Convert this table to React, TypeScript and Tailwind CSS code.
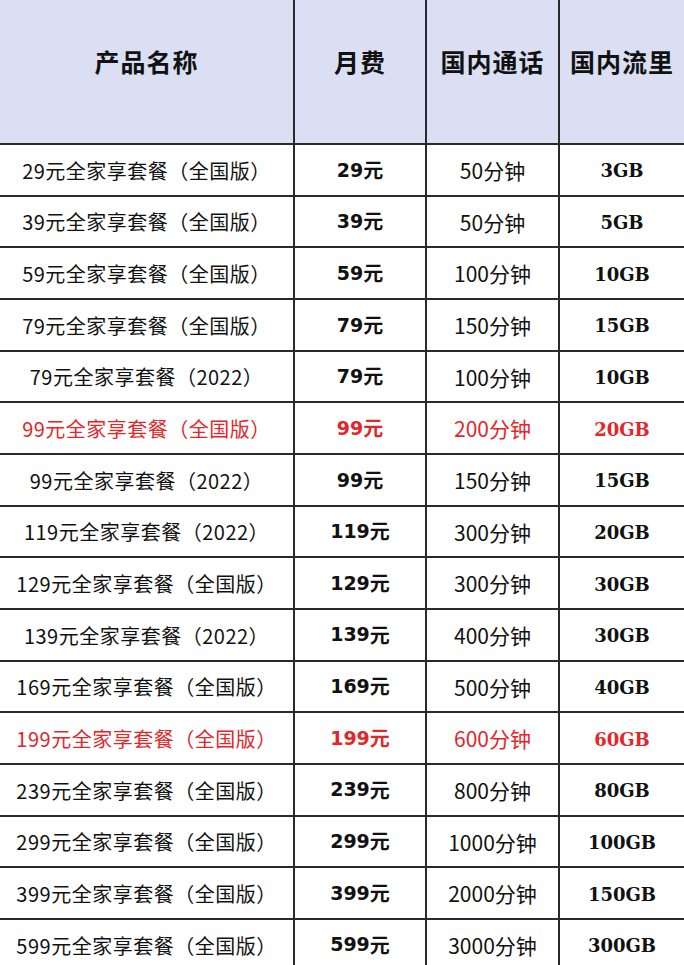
const rows = [
  { name: '29元全家享套餐（全国版）', fee: '29', call: '50分钟', data: '3GB' },
  { name: '39元全家享套餐（全国版）', fee: '39', call: '50分钟', data: '5GB' },
  { name: '59元全家享套餐（全国版）', fee: '59', call: '100分钟', data: '10GB' },
  { name: '79元全家享套餐（全国版）', fee: '79', call: '150分钟', data: '15GB' },
  { name: '79元全家享套餐（2022）', fee: '79', call: '100分钟', data: '10GB' },
  { name: '99元全家享套餐（全国版）', fee: '99', call: '200分钟', data: '20GB', red: true },
  { name: '99元全家享套餐（2022）', fee: '99', call: '150分钟', data: '15GB' },
  { name: '119元全家享套餐（2022）', fee: '119', call: '300分钟', data: '20GB' },
  { name: '129元全家享套餐（全国版）', fee: '129', call: '300分钟', data: '30GB' },
  { name: '139元全家享套餐（2022）', fee: '139', call: '400分钟', data: '30GB' },
  { name: '169元全家享套餐（全国版）', fee: '169', call: '500分钟', data: '40GB' },
  { name: '199元全家享套餐（全国版）', fee: '199', call: '600分钟', data: '60GB', red: true },
  { name: '239元全家享套餐（全国版）', fee: '239', call: '800分钟', data: '80GB' },
  { name: '299元全家享套餐（全国版）', fee: '299', call: '1000分钟', data: '100GB' },
  { name: '399元全家享套餐（全国版）', fee: '399', call: '2000分钟', data: '150GB' },
  { name: '599元全家享套餐（全国版）', fee: '599', call: '3000分钟', data: '300GB' },
];

const cjk = "font-['Noto_Sans_CJK_SC',sans-serif]";
const cell = 'flex items-center justify-center border-b-2 border-[#2a2a2a]';
const head = `${cell} bg-[#dadff3] pb-5 text-[25px] font-bold text-[#111]`;

export default function App() {
  return (
    <div className={`h-[965px] w-[684px] overflow-hidden bg-white ${cjk}`}>
      <div className="grid grid-cols-[295px_132px_133px_1fr] grid-rows-[145px_repeat(16,51.67px)]">
        <div className={`${head} border-r-2 tracking-[1px]`}>产品名称</div>
        <div className={`${head} border-r-2 tracking-[1px]`}>月费</div>
        <div className={`${head} border-r-2 tracking-[1px]`}>国内通话</div>
        <div className={`${head} tracking-[1px]`}>国内流里</div>
        {rows.map((r) => {
          const color = r.red ? 'text-[#e3262a]' : 'text-[#111]';
          return (
            <div key={r.name} className="contents">
              <div className={`${cell} border-r-2 pt-0.5 text-[20px] tracking-[0.5px] ${color}`}>{r.name}</div>
              <div className={`${cell} border-r-2 font-bold ${color}`}>
                <span className="font-['DejaVu_Sans',sans-serif] text-[19px]">{r.fee}</span>
                <span className="text-[20px]">元</span>
              </div>
              <div className={`${cell} border-r-2 pt-0.5 text-[21px] ${color}`}>{r.call}</div>
              <div className={`${cell} pt-0.5 font-['DejaVu_Serif',serif] text-[18px] font-bold ${color}`}>{r.data}</div>
            </div>
          );
        })}
      </div>
    </div>
  );
}
